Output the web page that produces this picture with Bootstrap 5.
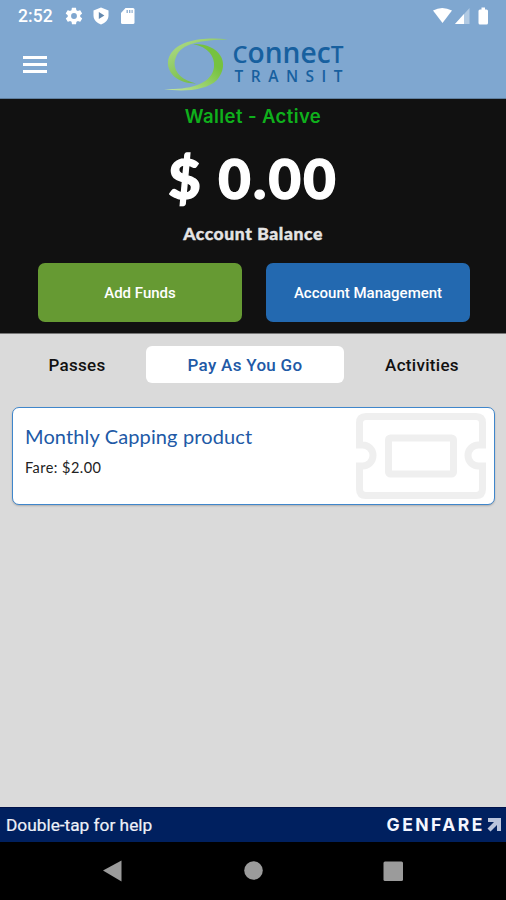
<!DOCTYPE html>
<html lang="en">
<head>
<meta charset="utf-8">
<meta name="viewport" content="width=device-width, initial-scale=1">
<title>Connect Transit Wallet</title>
<link href="https://cdn.jsdelivr.net/npm/bootstrap@5.3.0/dist/css/bootstrap.min.css" rel="stylesheet">
<style>
body{font-family:Roboto,"Liberation Sans",sans-serif;background:#dadada;height:900px;overflow:hidden}
svg{display:block;flex:none}
.top-area{background:#7fa7d0;height:99px;border-bottom:1px solid #5f7f9f}
.status-bar{height:32px;padding:0 16px 0 18px}
.clock{font-size:17.5px;font-weight:500;line-height:32px;width:46px;letter-spacing:.1px}
.app-bar{height:66px;padding-left:23px}
.logo{margin-left:117px}
.wallet{background:#111;height:235px;border-bottom:1px solid #777}
.wallet-state{font:600 18.5px/34px Inter,sans-serif;color:#0fb01c;letter-spacing:.4px}
.amount{font:900 56px/90px Lato,sans-serif;letter-spacing:2.2px;-webkit-text-stroke:1.4px #fff}
.amount-label{font:900 17.5px/22px Lato,sans-serif;color:#e4e4e4;letter-spacing:.6px;-webkit-text-stroke:.4px #e4e4e4}
.wallet-actions{padding:18px 36px 0 38px;gap:24px}
.wallet-actions .btn{height:59px;border:0;border-radius:7px;font-size:15px;font-weight:500;color:#fff;padding:8px 0 6px}
.btn-funds,.btn-funds:hover{background:#669a33}
.btn-manage,.btn-manage:hover{background:#2369b0}
.tabs{height:73px;padding:12px 15px 0 8px}
.tabs .nav-link{height:37px;padding:0;line-height:38px;font-size:17px;font-weight:500;letter-spacing:.3px;color:#111;border-radius:6px}
.tabs .nav-link.active{background:#fff;color:#2159a6}
.tab-side{width:138px}.tab-mid{width:198px}
.pass{margin:0 11px 0 12px;height:98px;border:1.5px solid #3f86cb;border-radius:7px;padding:14px 8px 0 12px;box-shadow:0 1px 2px #0003}
.pass-name{font:400 20px/28px Lato,sans-serif;color:#2159a6;letter-spacing:.13px}
.pass-fare{font:400 14.5px/20px Lato,sans-serif;color:#222;margin-top:8px;letter-spacing:.45px}
.ticket{margin-top:-9px}
.help-bar{background:#00205f;height:35px;padding:0 5px 0 6px;border-top:1px solid #00124a}
.help-text{font-size:17.3px;line-height:35px;color:#eef0f8;-webkit-text-stroke:.2px #eef0f8}
.system-nav{height:58px}
</style>
<script src="https://cdn.jsdelivr.net/npm/bootstrap@5.3.0/dist/js/bootstrap.bundle.min.js"></script>
</head>
<body class="d-flex flex-column">
<header class="top-area">
  <div class="status-bar d-flex align-items-center text-white">
    <span class="clock">2:52</span>
    <svg width="20" height="20" viewBox="0 0 24 24" fill="#fff"><path fill-rule="evenodd" d="M19.4 13c.1-.3.1-.7.1-1s0-.7-.1-1l2.1-1.600c.2-.1.2-.4.1-.6l-2-3.500c-.1-.2-.4-.3-.6-.2l-2.500 1a7 7 0 0 0-1.700-1L14.400 2.400c0-.2-.2-.4-.5-.4h-4c-.2 0-.4.200-.5.400L9 5.100a8 8 0 0 0-1.700 1l-2.500-1c-.2-.1-.5 0-.6.2l-2 3.500c-.1.200-.1.500.1.600L4.500 11a8 8 0 0 0 0 2l-2.100 1.600c-.2.200-.3.400-.1.700l2 3.400c.1.200.4.300.6.200l2.500-1q.8.600 1.700 1l.4 2.700c0 .2.200.400.500.400h4c.2 0 .4-.2.500-.4l.4-2.700a7 7 0 0 0 1.700-1l2.500 1c.2.100.500 0 .6-.2l2-3.400c.1-.3.1-.5-.1-.7zM12 15.500a3.500 3.500 0 1 1 0-7 3.500 3.500 0 0 1 0 7z"/></svg>
    <svg class="ms-2" width="18" height="20" viewBox="0 0 18 20"><path fill="#fff" d="M9 1.500 16.500 4.500v5c0 4-3 7.500-7.500 9C4.500 17 1.500 13.500 1.500 9.500v-5z"/><path fill="#6388ae" d="M6.800 6v7l5.600-3.500z"/></svg>
    <svg class="ms-2" width="20" height="18" viewBox="0 0 20 18"><path fill="#fff" d="M7.500 1H15q1.500 0 1.500 1.500v13Q16.500 17 15 17H4.500q-1.500 0-1.500-1.500V6z"/><path fill="#8fb0d2" d="M8.500 3h1.400v3H8.500zm2.500 0h1.400v3H11zm2.500 0h1.200v3h-1.200z"/></svg>
    <svg class="ms-auto" width="58" height="20" viewBox="0 0 58 20"><path fill="#fff" d="M1 4.500q9-5 19 0L10.500 17z"/><path fill="#b1cae3" d="M37.500 2v16H23z"/><path fill="#fff" d="M32 8v10h-9z"/><path fill="#fff" d="M49.500 1.500h3.500v2h1.500q1.500 0 1.500 1.500v12q0 1.500-1.500 1.500H48q-1.500 0-1.500-1.500V5q0-1.500 1.500-1.500h1.500z"/></svg>
  </div>
  <div class="app-bar d-flex">
    <svg class="mt-4" width="24" height="17" viewBox="0 0 24 17"><path stroke="#fff" stroke-width="3" d="M0 1.600h24M0 8.600h24M0 15.400h24"/></svg>
    <svg class="logo" width="184" height="60" viewBox="164 32 184 60">
      <defs><linearGradient id="ga" x1="0" y1="0" x2=".7" y2="1"><stop offset="0" stop-color="#b3dd8c"/><stop offset="1" stop-color="#6cb83c"/></linearGradient><linearGradient id="gb" x1="1" y1="0" x2="0" y2="1"><stop offset=".3" stop-color="#76c23f"/><stop offset="1" stop-color="#c6e6a4"/></linearGradient></defs>
      <path fill="url(#ga)" d="M228 39.500C207 37 179 39 170 55c-7 13 4 29 26 28.500C179 80 171 68 176 57c5-14 26-17 52-17.500z"/>
      <path fill="url(#gb)" d="M193 44c15 3 22 12 21 23-2 17-24 23-50 22 17 3 42 2 53-9 15-18 1-37-24-36z"/>
      <g fill="#17609f" font-family="Open Sans, sans-serif" font-weight="600">
        <text x="232.500" y="62.500" font-size="28.500" textLength="111" lengthAdjust="spacingAndGlyphs"><tspan font-size="24">C</tspan>onnec<tspan font-size="23">T</tspan></text>
        <text x="234.500" y="81.500" font-size="15.500" textLength="108">TRANSIT</text>
      </g>
    </svg>
  </div>
</header>
<section class="wallet text-center text-white">
  <div class="wallet-state">Wallet - Active</div>
  <div class="amount">$ 0.00</div>
  <div class="amount-label">Account Balance</div>
  <div class="wallet-actions d-flex">
    <button class="btn btn-funds flex-fill w-50">Add Funds</button>
    <button class="btn btn-manage flex-fill w-50">Account Management</button>
  </div>
</section>
<nav class="tabs nav d-flex flex-nowrap text-center">
  <a class="nav-link tab-side" href="#">Passes</a>
  <a class="nav-link active tab-mid" href="#">Pay As You Go</a>
  <a class="nav-link tab-side ms-auto" href="#">Activities</a>
</nav>
<main class="flex-grow-1">
  <article class="pass bg-white d-flex justify-content-between">
    <div>
      <div class="pass-name">Monthly Capping product</div>
      <div class="pass-fare">Fare: $2.00</div>
    </div>
    <svg class="ticket" width="130" height="86" viewBox="0 0 130 86" fill="none" stroke="#efefef" stroke-width="7"><path d="M3.500 35V10q0-6.500 6.500-6.500h110q6.500 0 6.500 6.500v25M126.500 50v26q0 6.500-6.500 6.500H10Q3.500 82.500 3.500 76V50M0 32h6.500a10.500 10.500 0 0 1 0 21H0M130 32h-7.500a10.500 10.500 0 0 0 0 21h7.500"/><rect x="32.500" y="25" width="65" height="36" rx="2"/></svg>
  </article>
</main>
<footer>
  <div class="help-bar d-flex justify-content-between align-items-center">
    <span class="help-text">Double-tap for help</span>
    <svg width="117" height="28" viewBox="384 811 117 28"><text x="386.500" y="831" fill="#f4f6ff" font-family="Inter, sans-serif" font-weight="700" font-size="17.500" textLength="96">GENFARE</text><path fill="#b9c4dc" d="M488 818h13v13h-4v-6l-6.500 6.500-3-3 6.500-6.500h-6z"/></svg>
  </div>
  <div class="system-nav bg-black d-flex justify-content-center align-items-center">
    <svg width="506" height="58" viewBox="0 842 506 58" fill="#9b9b9b"><path d="M103 870.500 121.500 860.500v21z"/><circle cx="253.500" cy="870.500" r="9.300"/><rect x="383.500" y="861.500" width="19.500" height="19.500" rx="1.500"/></svg>
  </div>
</footer>
</body>
</html>
